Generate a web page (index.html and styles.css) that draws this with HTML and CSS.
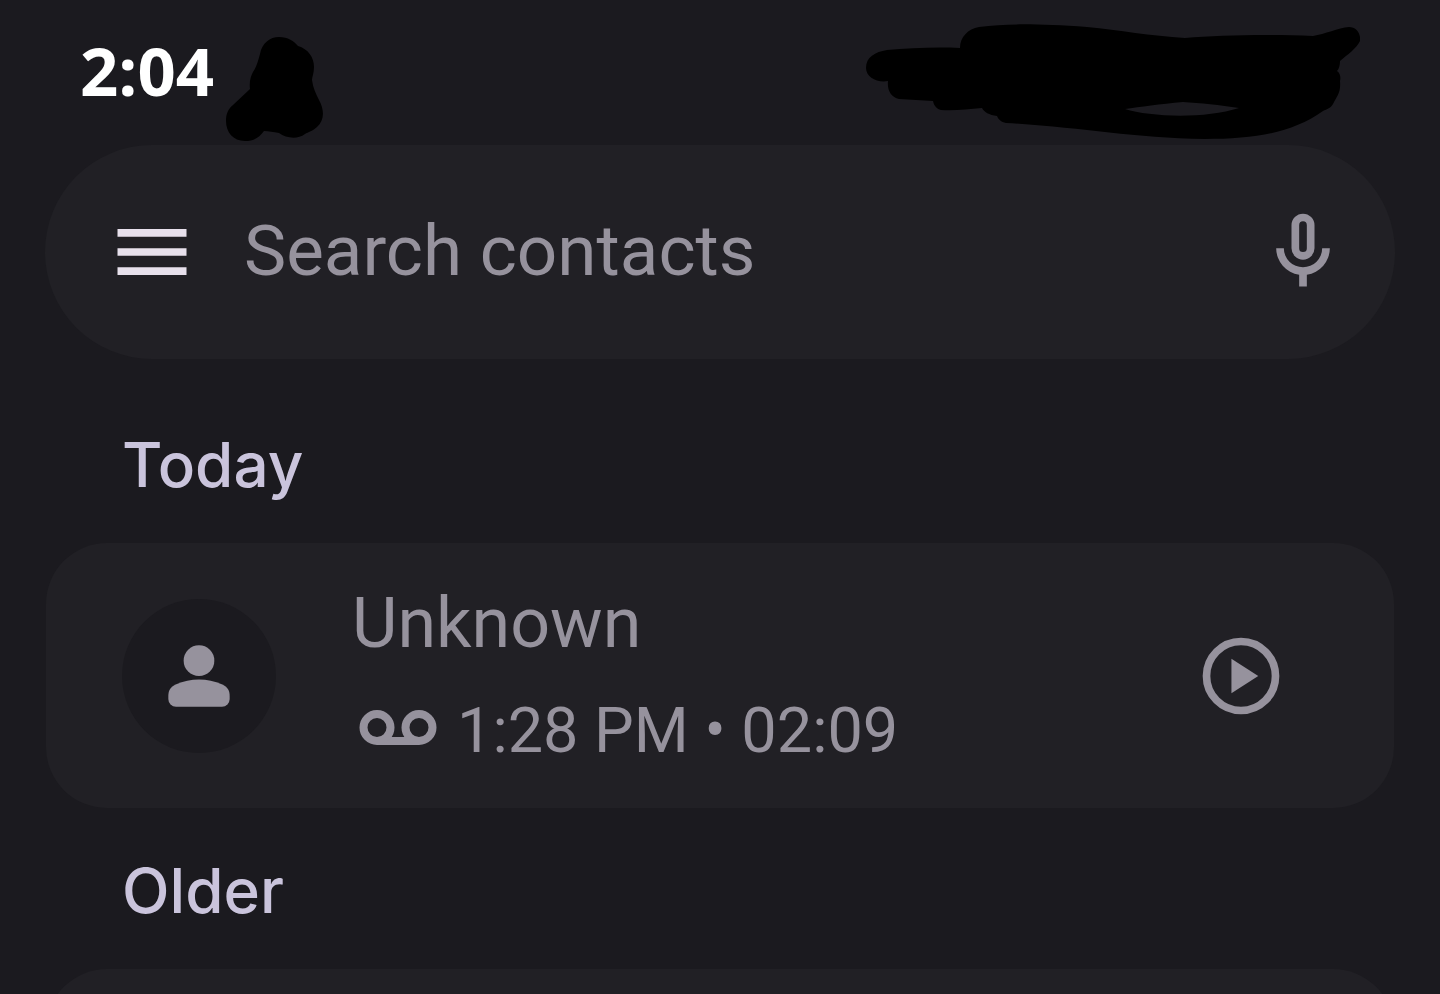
FILE: index.html
```html
<!DOCTYPE html>
<html lang="en">
<head>
    <meta charset="UTF-8">
    <meta name="viewport" content="width=device-width, initial-scale=1">
    <title>Voicemail</title>
    <link rel="stylesheet" href="styles.css">
</head>
<body>
    <div class="screen">
        <header class="status-bar">
            <span class="clock">2:04</span>
            <svg class="blot" width="98" height="105" viewBox="225 37 98 105" aria-hidden="true">
                <path d="M260 54C262 43 270 37 279 37C288 37 294 41 298 46C308 49 314 57 314 67C314 73 312 77 312 80C313 88 316 94 319 100C325 111 324 121 317 127C313 131 308 132 305 134C297 140 286 138 279 133C273 132 269 131 264 131C259 138 253 141 245 141C233 141 226 132 226 121C226 114 228 109 233 105L250 89C249 81 251 76 253 72C257 66 258 61 260 54Z"/>
            </svg>
            <svg class="scribble" width="494" height="116" viewBox="866 24 494 116" aria-hidden="true">
                <path fill-rule="evenodd" d="M887 50C910 48 935 47 960 48C960 37 968 29 979 27C1010 23 1040 24 1087 27C1120 30 1150 36 1185 38C1220 35 1270 34 1313 36C1325 34 1338 28 1349 27C1356 27 1361 33 1360 41C1357 48 1347 55 1340 61C1340 65 1339 69 1337 71C1340 73 1341 77 1340 81C1341 93 1337 96 1333 104C1331 108 1327 109 1323 111C1292 133 1255 139 1205 139C1130 138 1080 127 1006 123C1001 122 998 119 997 116C989 115 984 112 982 108C968 109 955 111 941 110C937 109 934 106 933 101L899 99C891 97 887 90 888 81C877 83 866 77 866 68C866 57 875 52 887 50ZM1125 109C1150 117 1205 119 1239 108C1220 105 1200 103 1183 102C1160 104 1140 107 1125 109Z"/>
            </svg>
        </header>

        <main class="content">
            <form class="search">
                <button class="icon-btn menu-btn" type="button" aria-label="Menu">
                    <svg class="icon" viewBox="0 0 24 24"><path d="M3 18h18v-2H3v2zm0-5h18v-2H3v2zm0-7v2h18V6H3z"/></svg>
                </button>
                <input class="search-input" type="text" placeholder="Search contacts" aria-label="Search contacts">
                <button class="icon-btn" type="button" aria-label="Voice search">
                    <svg class="icon" viewBox="0 0 24 24"><path fill-rule="evenodd" d="M12 2a3 3 0 0 1 3 3v6a3 3 0 0 1-6 0V5a3 3 0 0 1 3-3zm0 2a1 1 0 0 0-1 1v6a1 1 0 0 0 2 0V5a1 1 0 0 0-1-1z"/><path d="M5 11h2a5 5 0 0 0 10 0h2a7 7 0 0 1-6 6.92V21h-2v-3.08A7 7 0 0 1 5 11z"/></svg>
                </button>
            </form>

            <section class="group">
                <h2 class="group-title">Today</h2>
                <article class="card">
                    <div class="avatar">
                        <svg class="icon" viewBox="0 0 24 24"><circle cx="12" cy="8" r="4"/><path d="M4 17.2c0-1.5.6-2.4 1.9-3C8 13.3 9.9 12.9 12 12.9s4 .4 6.1 1.3c1.3.6 1.9 1.5 1.9 3v.8a2 2 0 0 1-2 2H6a2 2 0 0 1-2-2z"/></svg>
                    </div>
                    <div class="call">
                        <h3 class="caller">Unknown</h3>
                        <p class="details">
                            <svg class="reels" viewBox="0 0 78 36" aria-label="Voicemail"><path d="M18 31H60"/><circle cx="18" cy="17.5" r="13.5"/><circle cx="60" cy="17.5" r="13.5"/></svg>
                            <span>1:28 PM • 02:09</span>
                        </p>
                    </div>
                    <button class="icon-btn" type="button" aria-label="Play voicemail">
                        <svg class="icon" viewBox="0 0 24 24"><circle cx="12" cy="12" r="9" fill="none" stroke="currentColor" stroke-width="2"/><path d="M9.5 16.5l7-4.5-7-4.5z"/></svg>
                    </button>
                </article>
            </section>

            <section class="group">
                <h2 class="group-title">Older</h2>
                <article class="card"></article>
            </section>
        </main>
    </div>
</body>
</html>
```

FILE: styles.css
```css
*{
    margin: 0;
    padding: 0;
    box-sizing: border-box;
}
body{
    background: #1b1a1f;
    color: #96929d;
    font-family: Roboto, "Liberation Sans", sans-serif;
}
.screen{
    height: 100vh;
    overflow: hidden;
}

/* status bar */
.status-bar{
    display: flex;
    align-items: flex-start;
    height: 145px;
    padding: 24px 80px 0;
}
.clock{
    color: #fff;
    font-family: "Open Sans", sans-serif;
    font-size: 67px;
    font-weight: 700;
    line-height: 92px;
}
.blot{
    margin: 13px 0 0 11px;
}
.scribble{
    margin-left: auto;
}

.content{
    padding: 0 45px;
}
.icon{
    display: block;
    width: 92px;
    height: 92px;
    fill: currentColor;
}
.icon-btn{
    flex: none;
    border: 0;
    background: none;
    color: inherit;
    cursor: pointer;
}

/* search */
.search{
    display: flex;
    align-items: center;
    height: 214px;
    padding: 0 46px 0 61px;
    border-radius: 107px;
    background: #212025;
}
.menu-btn{
    color: #e7e0ec;
}
.search-input{
    flex: 1;
    min-width: 0;
    height: 96px;
    margin-left: 46px;
    padding-bottom: 4px;
    border: 0;
    outline: 0;
    background: none;
    color: inherit;
    font-family: inherit;
    font-size: 71px;
}
.search-input::placeholder{
    color: #96929d;
    opacity: 1;
}

/* voicemail list */
.search + .group{
    margin-top: 23px;
}
.group{
    padding: 0 1px;
}
.group-title{
    padding: 35px 76px 30px;
    color: #cac4dc;
    font-family: Inter, sans-serif;
    font-size: 62px;
    font-weight: 500;
    line-height: 96px;
}
.card{
    display: flex;
    align-items: center;
    min-height: 265px;
    padding: 0 107px 0 76px;
    border-radius: 61px;
    background: #212025;
}
.avatar{
    display: flex;
    flex: none;
    align-items: center;
    justify-content: center;
    width: 154px;
    height: 154px;
    border-radius: 50%;
    background: #1b1a1f;
}
.call{
    flex: 1;
    margin-left: 76px;
    padding-top: 2px;
}
.caller{
    font-size: 70px;
    font-weight: 400;
    line-height: 108px;
}
.details{
    display: flex;
    align-items: center;
    gap: 20px;
    padding-left: 7px;
    font-size: 63px;
    line-height: 108px;
}
.reels{
    width: 78px;
    height: 36px;
    margin-bottom: 6px;
    fill: none;
    stroke: currentColor;
    stroke-width: 8px;
}
```
